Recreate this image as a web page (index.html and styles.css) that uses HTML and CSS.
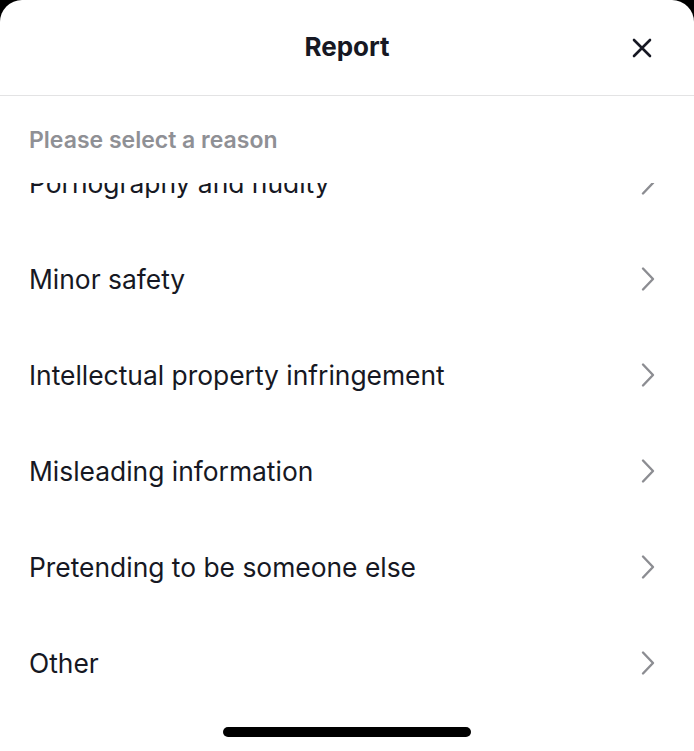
FILE: index.html
```html
<!DOCTYPE html>
<html lang="en">

<head>
    <meta charset="UTF-8">
    <meta name="viewport" content="width=device-width, initial-scale=1.0">
    <title>Report</title>
    <link rel="stylesheet" href="styles.css">
</head>

<body>

    <div class="sheet">
        <div class="head">
            <span></span>
            <h1 class="title">Report</h1>
            <div class="close">
                <svg width="22" height="22" viewBox="0 0 22 22">
                    <path d="M3 3 L19 19 M19 3 L3 19" stroke="#161823" stroke-width="2.6" stroke-linecap="round" fill="none"/>
                </svg>
            </div>
        </div>

        <p class="hint">Please select a reason</p>

        <div class="scroll">
            <ul class="reasons">
                <li>
                    <span>Pornography and nudity</span>
                    <svg class="chev" width="14" height="26" viewBox="0 0 14 26"><path d="M2 2.5 L12 13 L2 23.5" /></svg>
                </li>
                <li>
                    <span>Minor safety</span>
                    <svg class="chev" width="14" height="26" viewBox="0 0 14 26"><path d="M2 2.5 L12 13 L2 23.5" /></svg>
                </li>
                <li>
                    <span>Intellectual property infringement</span>
                    <svg class="chev" width="14" height="26" viewBox="0 0 14 26"><path d="M2 2.5 L12 13 L2 23.5" /></svg>
                </li>
                <li>
                    <span>Misleading information</span>
                    <svg class="chev" width="14" height="26" viewBox="0 0 14 26"><path d="M2 2.5 L12 13 L2 23.5" /></svg>
                </li>
                <li>
                    <span>Pretending to be someone else</span>
                    <svg class="chev" width="14" height="26" viewBox="0 0 14 26"><path d="M2 2.5 L12 13 L2 23.5" /></svg>
                </li>
                <li>
                    <span>Other</span>
                    <svg class="chev" width="14" height="26" viewBox="0 0 14 26"><path d="M2 2.5 L12 13 L2 23.5" /></svg>
                </li>
            </ul>
        </div>

        <div class="home-bar"></div>
    </div>

</body>

</html>
```

FILE: styles.css
```css
* {
    padding: 0;
    margin: 0;
    list-style: none;
    box-sizing: border-box;
}

html,
body {
    background: #000;
    font-family: "Inter", "Liberation Sans", sans-serif;
    color: #161823;
}

.sheet {
    display: flex;
    flex-direction: column;
    width: 694px;
    height: 751px;
    background: #fff;
    border-radius: 22px 22px 0 0;
    overflow: hidden;
}

/* header */
.head {
    display: grid;
    grid-template-columns: 1fr auto 1fr;
    align-items: center;
    height: 96px;
    border-bottom: 1px solid #e3e3e4;
}

.title {
    font-size: 26px;
    font-weight: 700;
    padding-bottom: 3px;
}

.close {
    justify-self: end;
    display: flex;
    margin-right: 41px;
}

.hint {
    padding: 30px 0 0 29px;
    font-size: 23px;
    font-weight: 600;
    color: #8f9095;
    height: 87px;
}

/* list */
.scroll {
    height: 533px;
    overflow: hidden;
}

.reasons {
    margin-top: -48px;
}

.reasons li {
    display: flex;
    align-items: center;
    justify-content: space-between;
    height: 96px;
    padding: 0 39px 0 29px;
    font-size: 26.4px;
}

.chev {
    fill: none;
    stroke: #8c8d92;
    stroke-width: 2.4;
    stroke-linecap: round;
    stroke-linejoin: round;
}

.home-bar {
    align-self: center;
    width: 248px;
    height: 10px;
    margin-top: 11px;
    border-radius: 5px;
    background: #000;
}
```
